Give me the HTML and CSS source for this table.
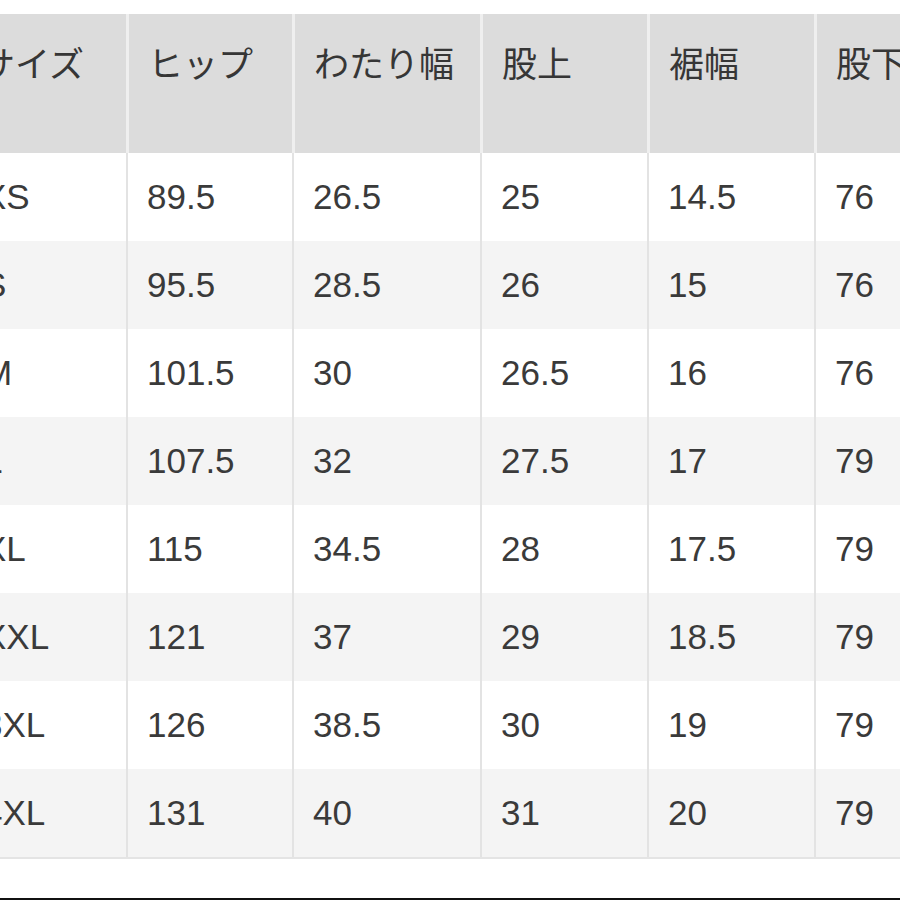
FILE: index.html
```html
<!DOCTYPE html>
<html lang="ja">
<head>
<meta charset="utf-8">
<title>サイズ表</title>
<link rel="stylesheet" href="styles.css">
</head>
<body>
<div class="page">
  <div class="viewport">
    <div class="table">
      <div class="row head">
        <div class="cell">サイズ</div>
        <div class="cell">ヒップ</div>
        <div class="cell">わたり幅</div>
        <div class="cell">股上</div>
        <div class="cell">裾幅</div>
        <div class="cell">股下</div>
      </div>
      <div class="row">
        <div class="cell">XS</div><div class="cell">89.5</div><div class="cell">26.5</div><div class="cell">25</div><div class="cell">14.5</div><div class="cell">76</div>
      </div>
      <div class="row alt">
        <div class="cell">S</div><div class="cell">95.5</div><div class="cell">28.5</div><div class="cell">26</div><div class="cell">15</div><div class="cell">76</div>
      </div>
      <div class="row">
        <div class="cell">M</div><div class="cell">101.5</div><div class="cell">30</div><div class="cell">26.5</div><div class="cell">16</div><div class="cell">76</div>
      </div>
      <div class="row alt">
        <div class="cell">L</div><div class="cell">107.5</div><div class="cell">32</div><div class="cell">27.5</div><div class="cell">17</div><div class="cell">79</div>
      </div>
      <div class="row">
        <div class="cell">XL</div><div class="cell">115</div><div class="cell">34.5</div><div class="cell">28</div><div class="cell">17.5</div><div class="cell">79</div>
      </div>
      <div class="row alt">
        <div class="cell">XXL</div><div class="cell">121</div><div class="cell">37</div><div class="cell">29</div><div class="cell">18.5</div><div class="cell">79</div>
      </div>
      <div class="row">
        <div class="cell">3XL</div><div class="cell">126</div><div class="cell">38.5</div><div class="cell">30</div><div class="cell">19</div><div class="cell">79</div>
      </div>
      <div class="row alt">
        <div class="cell">4XL</div><div class="cell">131</div><div class="cell">40</div><div class="cell">31</div><div class="cell">20</div><div class="cell">79</div>
      </div>
    </div>
  </div>
  <div class="edge"></div>
</div>
</body>
</html>
```

FILE: styles.css
```css
html, body {
  margin: 0;
  padding: 0;
  background: #ffffff;
}

.page {
  width: 900px;
  height: 900px;
  overflow: hidden;
  display: flex;
  flex-direction: column;
  box-sizing: border-box;
  padding-top: 14px;
  background: #ffffff;
}

.viewport {
  width: 900px;
  overflow: hidden;
}

.table {
  margin-left: -39px;
  width: 1050px;
  border-bottom: 2px solid #e4e4e4;
  font-family: "Liberation Sans", "Noto Sans CJK JP", sans-serif;
  color: #3a3a3a;
}

.row {
  display: grid;
  grid-template-columns: 165px 166px 188px 167px 167px 197px;
  height: 88px;
  background: #ffffff;
}

.row.alt {
  background: #f4f4f4;
}

.cell {
  box-sizing: border-box;
  padding-left: 19px;
  border-left: 2px solid #e3e3e3;
  display: flex;
  align-items: center;
  font-size: 35px;
  line-height: 40px;
  white-space: nowrap;
}

.row .cell:first-child {
  border-left: none;
  padding-left: 22px;
}

.row.head {
  height: 139px;
  background: #dcdcdc;
}

.row.head .cell {
  font-family: "Noto Sans CJK JP", sans-serif;
  font-size: 35px;
  align-items: flex-start;
  padding-top: 28px;
  border-left-color: #efefef;
  border-left-width: 3px;
  color: #363636;
}

.row.head .cell:first-child {
  border-left: none;
  padding-left: 19px;
}

.edge {
  margin-top: auto;
  height: 2px;
  background: #111111;
}
```
